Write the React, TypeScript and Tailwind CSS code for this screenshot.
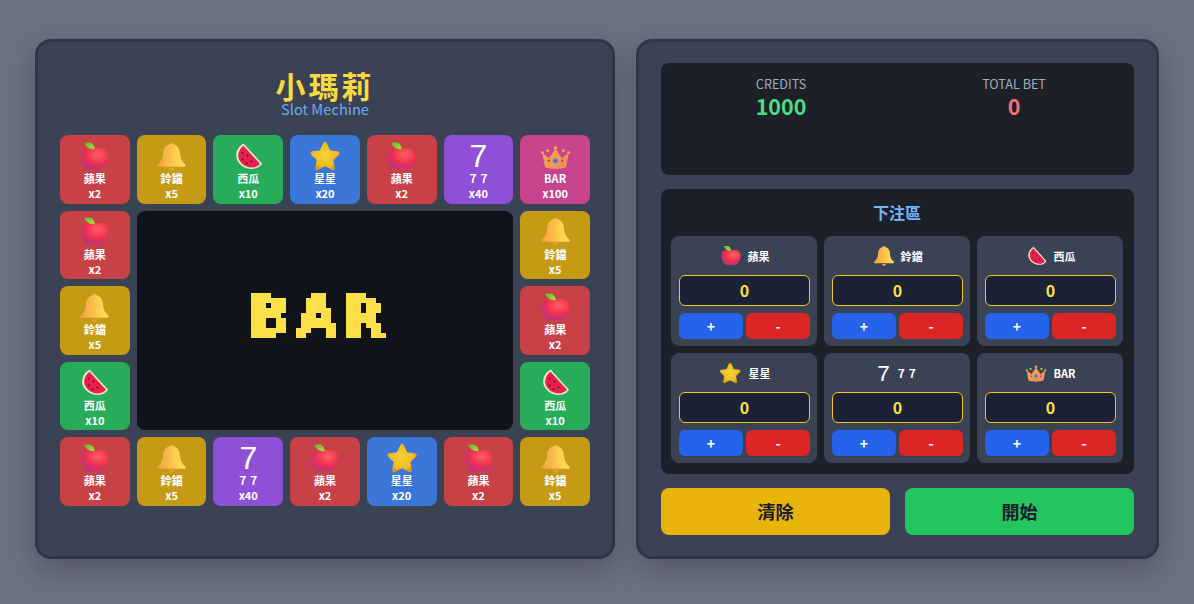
import React from "react";

type Kind = "apple" | "bell" | "melon" | "star" | "seven" | "crown";

const info: Record<Kind, { label: string; mult: string; bg: string }> = {
  apple: { label: "蘋果", mult: "x2", bg: "bg-[#c84147]" },
  bell: { label: "鈴鐺", mult: "x5", bg: "bg-[#c49b12]" },
  melon: { label: "西瓜", mult: "x10", bg: "bg-[#27ad5a]" },
  star: { label: "星星", mult: "x20", bg: "bg-[#3b76d9]" },
  seven: { label: "７７", mult: "x40", bg: "bg-[#8f4fd6]" },
  crown: { label: "BAR", mult: "x100", bg: "bg-[#c8448c]" },
};

function Defs() {
  return (
    <svg width="0" height="0" className="absolute">
      <defs>
        <radialGradient id="appleG" cx="0.62" cy="0.3" r="0.8">
          <stop offset="0" stopColor="#ff5f60" />
          <stop offset="0.55" stopColor="#ee2f52" />
          <stop offset="1" stopColor="#a8358f" />
        </radialGradient>
        <linearGradient id="leafG" x1="0" y1="0" x2="1" y2="1">
          <stop offset="0" stopColor="#5fb82c" />
          <stop offset="1" stopColor="#b5dc3f" />
        </linearGradient>
        <linearGradient id="bellG" x1="0" y1="0" x2="1" y2="0">
          <stop offset="0" stopColor="#f59e3f" />
          <stop offset="0.7" stopColor="#ffd24f" />
          <stop offset="1" stopColor="#ffdf5e" />
        </linearGradient>
        <radialGradient id="starG" cx="0.5" cy="0.45" r="0.6">
          <stop offset="0" stopColor="#f7d13a" />
          <stop offset="0.8" stopColor="#f0bb1f" />
          <stop offset="1" stopColor="#d99a1a" />
        </radialGradient>
        <linearGradient id="crownG" x1="0" y1="0" x2="1" y2="1">
          <stop offset="0" stopColor="#f2a650" />
          <stop offset="1" stopColor="#ec8f5c" />
        </linearGradient>
        <filter id="pixelate" x="0" y="0" width="100%" height="100%">
          <feFlood x="2" y="3" width="1" height="1" />
          <feComposite width="5" height="5" />
          <feTile result="cell" />
          <feComposite in="SourceGraphic" in2="cell" operator="in" />
          <feMorphology operator="dilate" radius="2" />
          <feComponentTransfer>
            <feFuncA type="discrete" tableValues="0 1 1 1" />
          </feComponentTransfer>
        </filter>
      </defs>
    </svg>
  );
}

function Emoji({ kind, size }: { kind: Kind; size: number }) {
  if (kind === "seven") {
    return (
      <span
        className="font-['Liberation_Sans'] font-normal text-white text-center block"
        style={{ fontSize: size * 1.03, lineHeight: `${size}px` }}
      >
        7
      </span>
    );
  }
  const s = kind === "star" ? size * 1.1 : size;
  return (
    <svg width={s} height={s} viewBox="0 0 32 32" className="shrink-0">
      {kind === "apple" && (
        <g>
          <path d="M16 8.500c3-1.600 7.500-2 10.700.2 3.100 2.100 3.900 6.300 3.100 10.300-.8 4.200-3.200 8.100-6.500 9.600-2.400 1-4.800.8-7.300.1-2.500.7-4.900.9-7.300-.1-3.300-1.500-5.700-5.400-6.500-9.600-.8-4 0-8.200 3.100-10.300C8.500 6.500 13 6.900 16 8.500z" fill="url(#appleG)" />
          <path d="M5.500 1.500h6c2.500.6 4.300 3 4.800 6.800C11.500 8.900 6.800 6.500 5.500 1.500z" fill="url(#leafG)" />
        </g>
      )}
      {kind === "bell" && (
        <g>
          <circle cx="16" cy="3.500" r="2" fill="#f2a94a" />
          <path d="M16 3c5.300 0 8.300 3.900 8.600 8.900.3 5 1.600 8.800 5.700 12.300.8.800.2 2.300-1 2.300H2.700c-1.200 0-1.800-1.500-1-2.300 4.100-3.500 5.400-7.300 5.700-12.300C7.700 6.900 10.700 3 16 3z" fill="url(#bellG)" />
          <path d="M13 27.500h6c0 1.600-1.300 2.700-3 2.700s-3-1.100-3-2.700z" fill="#ea9a3e" />
        </g>
      )}
      {kind === "melon" && (
        <g>
          <path d="M11 2.500 30 23.500c-2.100 2.900-5 4.700-8.500 5.200C14 29.800 6.200 25.500 3.800 18.300 2 12.500 4.800 6 11 2.500z" fill="#e9e8c4" />
          <path d="M10.800 4.800 27.800 23.600c-1.800 2-4 3.200-6.800 3.600-6.500.8-13.300-3-15.200-9.300-1.400-4.800.9-10 5-13.100z" fill="#ea1f4b" />
          <g fill="#3a1f33">
            <circle cx="10" cy="12" r="1" />
            <circle cx="15" cy="15" r="1" />
            <circle cx="10" cy="19" r="1" />
            <circle cx="19" cy="21" r="1" />
            <circle cx="14" cy="23" r="1" />
          </g>
        </g>
      )}
      {kind === "star" && (
        <path
          d="M16 4.500l3.700 7.700 8.300 1.100-6.100 5.900 1.600 8.300L16 23.500l-7.500 4 1.600-8.300L4 13.300l8.300-1.100z"
          fill="url(#starG)"
          stroke="url(#starG)"
          strokeWidth="3.500"
          strokeLinejoin="round"
        />
      )}
      {kind === "crown" && (
        <g>
          <path d="M5 27 2.500 12.500l7 5L16 8l6.500 9.500 7-5L27 27c-6 2.200-16 2.200-22 0z" fill="url(#crownG)" />
          <g fill="#f0b24a">
            <circle cx="16" cy="7" r="1.800" />
            <circle cx="8" cy="10" r="1.500" />
            <circle cx="24" cy="10" r="1.500" />
            <circle cx="2.500" cy="12" r="1.500" />
            <circle cx="29.500" cy="12" r="1.500" />
          </g>
          <circle cx="16" cy="20.500" r="2.500" fill="#3a7be8" />
          <circle cx="9" cy="20.500" r="1.300" fill="#e8325a" />
          <circle cx="23" cy="20.500" r="1.300" fill="#e8325a" />
          <circle cx="3.900" cy="20.500" r="1" fill="#5a8de8" />
          <circle cx="28.100" cy="20.500" r="1" fill="#5a8de8" />
        </g>
      )}
    </svg>
  );
}

function Tile({ kind }: { kind: Kind }) {
  const d = info[kind];
  return (
    <div className={`${d.bg} rounded-lg flex flex-col items-center pt-[6px] text-white`}>
      <div className="h-[30px] flex items-center justify-center">
        <Emoji kind={kind} size={31} />
      </div>
      <div className="text-[11px] font-bold leading-[15px]">{d.label}</div>
      <div className="text-[11px] font-bold leading-[15px]">{d.mult}</div>
    </div>
  );
}

function BetCard({ kind }: { kind: Kind }) {
  const d = info[kind];
  return (
    <div className="bg-[#3a4354] rounded-lg pl-2 pr-[7px] pt-[9px] pb-[7px] flex flex-col">
      <div className="h-[22px] flex items-center justify-center gap-[6px] text-white">
        <Emoji kind={kind} size={22} />
        <span className="text-[11px] font-bold leading-none">{d.label}</span>
      </div>
      <div className="mt-2 h-[31px] pb-px bg-[#1a2233] border border-[#f5c518] rounded-md flex items-center justify-center text-[#fde047] font-bold text-base">
        0
      </div>
      <div className="mt-[7px] grid grid-cols-2 gap-[3px]">
        <button className="h-[26px] bg-[#2563eb] rounded-md text-white font-bold text-sm leading-none">+</button>
        <button className="h-[26px] bg-[#dc2626] rounded-md text-white font-bold text-sm leading-none">-</button>
      </div>
    </div>
  );
}

export default function App() {
  const top: Kind[] = ["apple", "bell", "melon", "star", "apple", "seven", "crown"];
  const bottom: Kind[] = ["apple", "bell", "seven", "apple", "star", "apple", "bell"];
  const bets: Kind[] = ["apple", "bell", "melon", "star", "seven", "crown"];
  return (
    <div className="w-[1194px] h-[604px] overflow-hidden bg-[#6b7280] flex items-start justify-center gap-[21px] pt-[39px] font-['Noto_Sans_CJK_TC','Noto_Sans',sans-serif]">
      <Defs />
      {/* Board */}
      <div className="w-[580px] h-[520px] bg-[#3a4354] border-[3px] border-[#2d3748] rounded-2xl shadow-[0_10px_30px_rgba(0,0,0,0.25)] px-[22px] pt-[24px] flex flex-col">
        <div className="h-[69px] flex flex-col items-center">
          <div className="text-[30px] leading-[36px] h-[36px] mt-[1px] font-bold tracking-[3px] text-[#f9d93f]">小瑪莉</div>
          <div className="text-[14.7px] leading-[20px] -mt-[4px] text-[#6aa8f5]">Slot Mechine</div>
        </div>
        <div className="grid grid-cols-7 grid-rows-5 gap-[7px] h-[371px]">
          {top.map((k, i) => (
            <Tile key={`t${i}`} kind={k} />
          ))}
          <Tile kind="apple" />
          <div className="col-span-5 row-span-3 bg-[#10141a] rounded-lg flex items-center justify-center overflow-hidden pb-[7px] pr-[10px]">
            <div className="text-[#fde047] text-[54px] leading-[60px] font-['DejaVu_Sans'] font-bold tracking-[6px] px-2 [-webkit-text-stroke:1px_#fde047] [filter:url(#pixelate)]">
              BAR
            </div>
          </div>
          <Tile kind="bell" />
          <Tile kind="bell" />
          <Tile kind="apple" />
          <Tile kind="melon" />
          <Tile kind="melon" />
          {bottom.map((k, i) => (
            <Tile key={`b${i}`} kind={k} />
          ))}
        </div>
      </div>
      {/* Control */}
      <div className="w-[523px] h-[520px] bg-[#3a4354] border-[3px] border-[#2d3748] rounded-2xl shadow-[0_10px_30px_rgba(0,0,0,0.25)] px-[22px] pt-[21px] flex flex-col gap-[14px]">
        <div className="h-[112px] bg-[#1b2029] rounded-lg grid grid-cols-2 gap-[17px] px-3 pt-[11px] text-center content-start">
          <div>
            <div className="text-[12.6px] leading-[19px] text-[#a0aec0]">CREDITS</div>
            <div className="text-[21.5px] leading-[28px] -mt-[1px] font-bold text-[#4ade80]">1000</div>
          </div>
          <div>
            <div className="text-[12.6px] leading-[19px] text-[#a0aec0]">TOTAL BET</div>
            <div className="text-[21.5px] leading-[28px] -mt-[1px] font-bold text-[#f87171]">0</div>
          </div>
        </div>
        <div className="h-[285px] bg-[#1b2029] rounded-lg pl-[10px] pr-[11px] pt-[10px]">
          <div className="h-[26px] mb-[11px] text-center text-[16px] leading-[26px] font-bold text-[#76b5fb]">下注區</div>
          <div className="grid grid-cols-3 gap-[7px]">
            {bets.map((k) => (
              <BetCard key={k} kind={k} />
            ))}
          </div>
        </div>
        <div className="h-[47px] grid grid-cols-2 gap-[15px]">
          <button className="bg-[#eab308] rounded-lg text-[#1a202c] font-bold text-[18px]">清除</button>
          <button className="bg-[#22c55e] rounded-lg text-[#1a202c] font-bold text-[18px]">開始</button>
        </div>
      </div>
    </div>
  );
}
